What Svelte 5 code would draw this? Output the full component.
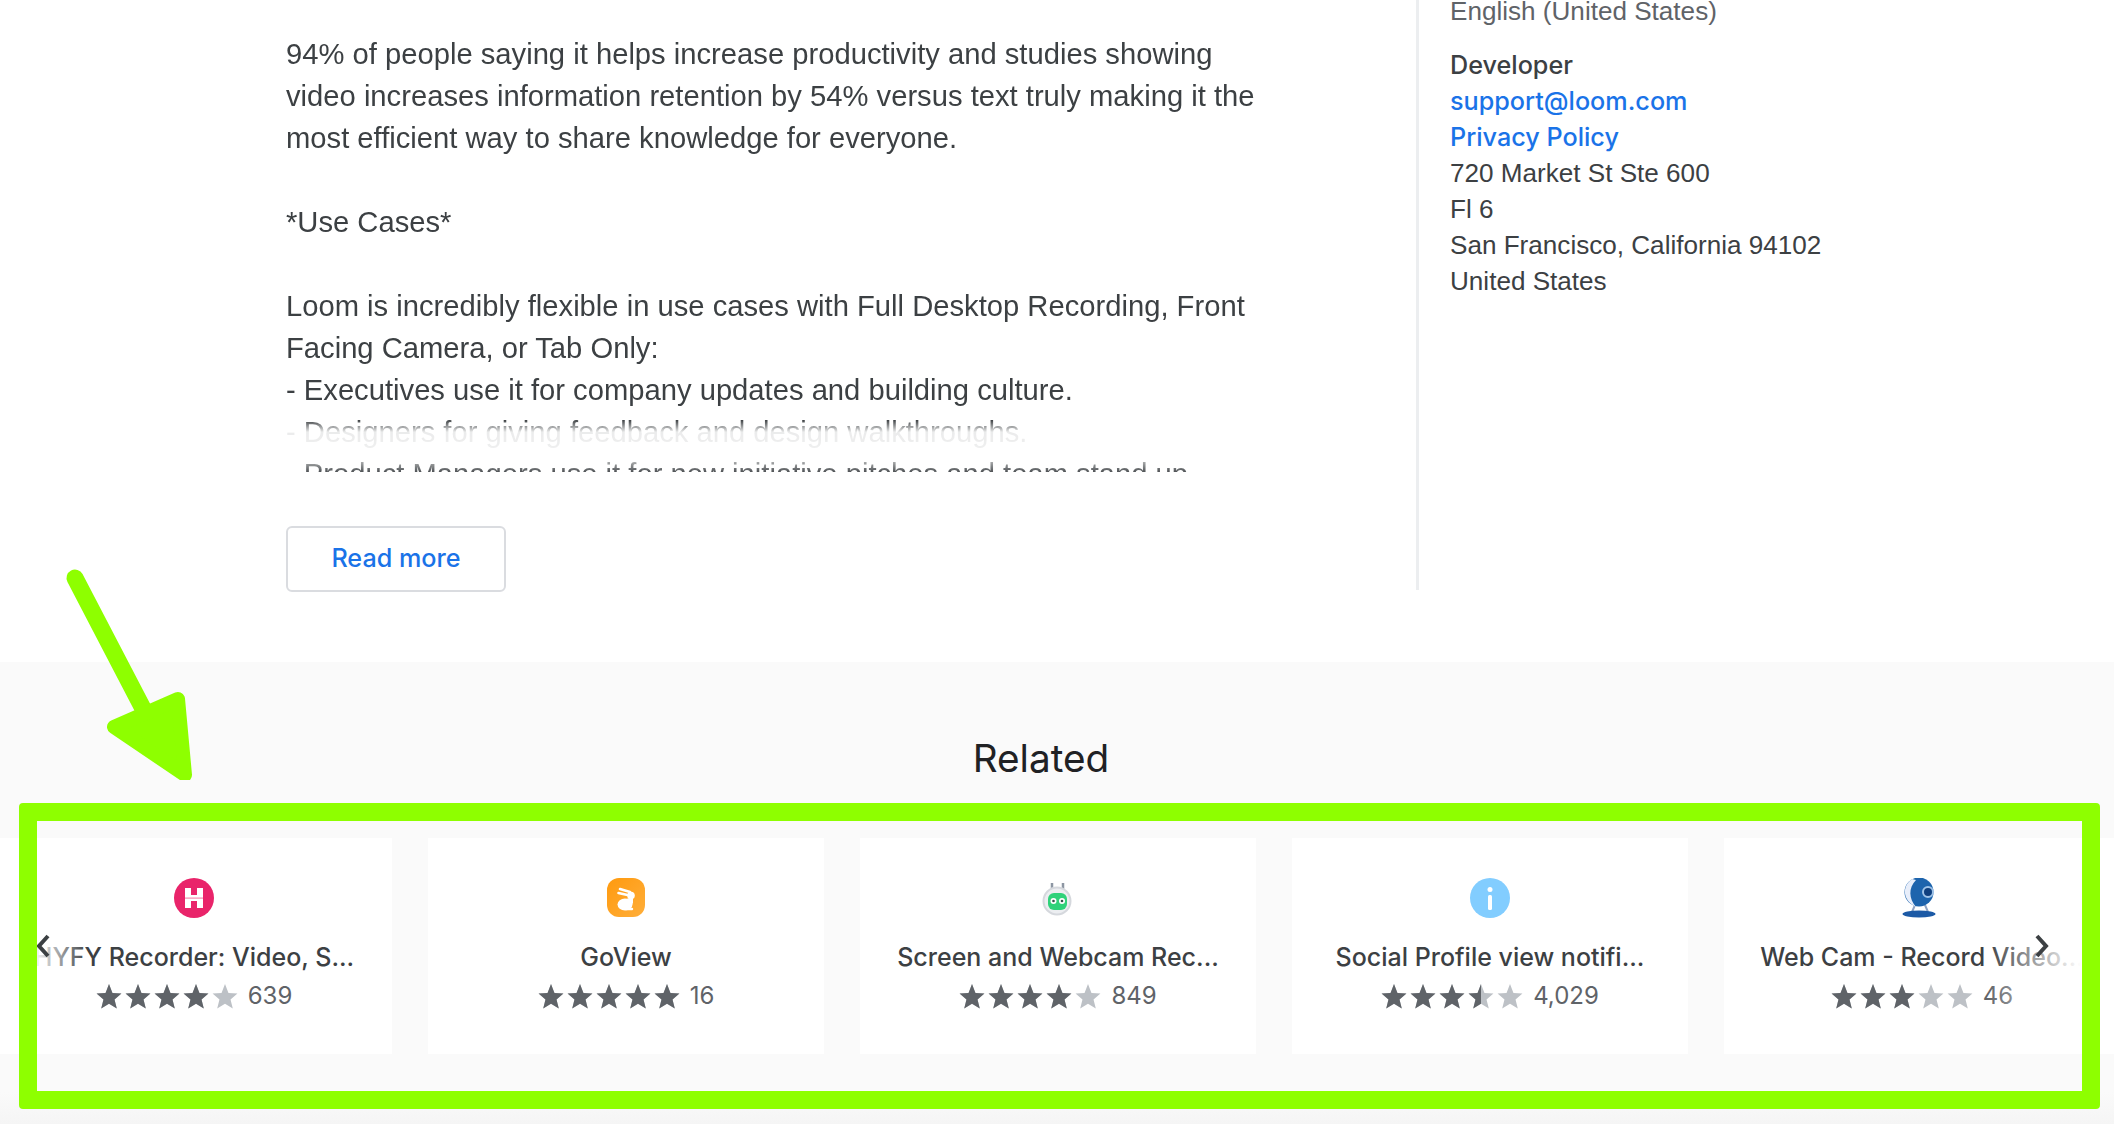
<script>
  const description = [
    "94% of people saying it helps increase productivity and studies showing",
    "video increases information retention by 54% versus text truly making it the",
    "most efficient way to share knowledge for everyone.",
    "",
    "*Use Cases*",
    "",
    "Loom is incredibly flexible in use cases with Full Desktop Recording, Front",
    "Facing Camera, or Tab Only:",
    "- Executives use it for company updates and building culture.",
    "- Designers for giving feedback and design walkthroughs.",
    "- Product Managers use it for new initiative pitches and team stand up",
  ];

  const address = ["720 Market St Ste 600", "Fl 6", "San Francisco, California 94102", "United States"];

  const cards = [
    { id: "hyfy", title: "HYFY Recorder: Video, S...", stars: [1, 1, 1, 1, 0], count: "639" },
    { id: "goview", title: "GoView", stars: [1, 1, 1, 1, 1], count: "16" },
    { id: "robot", title: "Screen and Webcam Rec...", stars: [1, 1, 1, 1, 0], count: "849" },
    { id: "info", title: "Social Profile view notifi...", stars: [1, 1, 1, 0.5, 0], count: "4,029" },
    { id: "webcam", title: "Web Cam - Record Video...", stars: [1, 1, 1, 0, 0], count: "46" },
  ];

  const starPath = "M12 1l3.2 8.2 8.3.6-6.4 5.4 2.1 8.4L12 19.1l-7.2 4.5 2.1-8.4L.5 9.8l8.3-.6z";
</script>

<main class="page">
  <section class="detail">
    <div class="overview">
      <div class="description">
        {#each description as line}
          <p class="line">{line}</p>
        {/each}
      </div>
      <button class="read-more">Read more</button>
    </div>
    <aside class="additional">
      <p class="language">English (United States)</p>
      <h3 class="label">Developer</h3>
      <a class="link" href="#support">support@loom.com</a>
      <a class="link" href="#privacy">Privacy Policy</a>
      {#each address as line}
        <p class="address">{line}</p>
      {/each}
    </aside>
  </section>

  <section class="related">
    <h2 class="related-title">Related</h2>
    <div class="carousel">
      {#each cards as card}
        <article class="card">
          <svg class="icon" viewBox="0 0 40 40" aria-hidden="true">
            {#if card.id === "hyfy"}
              <circle cx="20" cy="20" r="20" fill="#e9246a" />
              <path d="M11 10h6v7h6v-7h6v20h-6v-7h-6v7h-6z" fill="#fff" />
              <path d="M11 19.5h18v1.2H11z" fill="#f48cb0" />
            {:else if card.id === "goview"}
              <defs>
                <linearGradient id="goview-bg" x1="0" y1="0" x2="1" y2="1">
                  <stop offset="0" stop-color="#ff9a0e" />
                  <stop offset="1" stop-color="#ffae3a" />
                </linearGradient>
              </defs>
              <rect x="1" y="0" width="38" height="39" rx="12" fill="url(#goview-bg)" />
              <path d="M14 11l10 3M12.5 15l9 2" stroke="#fff" stroke-width="2.6" stroke-linecap="round" />
              <circle cx="25" cy="17.5" r="3.8" fill="#fff" />
              <ellipse cx="19" cy="26.5" rx="7.5" ry="6" fill="#fff" />
              <path d="M20 21l7-2 0 6-3 4z" fill="#fff" />
              <path d="M20 31h6" stroke="#fff" stroke-width="2.4" stroke-linecap="round" />
            {:else if card.id === "robot"}
              <path d="M14 5v9M25 5v9" stroke="#8d96a3" stroke-width="2.5" />
              <circle cx="19" cy="23" r="13.5" fill="#eceef1" stroke="#d5d8dd" stroke-width="2" />
              <rect x="10" y="15" width="19" height="17" rx="6" fill="#2fd27a" />
              <circle cx="15.5" cy="23" r="3" fill="#fff" />
              <circle cx="24" cy="23" r="3" fill="#fff" />
              <circle cx="15.5" cy="23" r="1.3" fill="#33524a" />
              <circle cx="24" cy="23" r="1.3" fill="#33524a" />
            {:else if card.id === "info"}
              <circle cx="20" cy="20" r="20" fill="#82cdff" />
              <circle cx="20" cy="11.5" r="2.5" fill="#fff" />
              <rect x="18" y="17" width="4" height="15" rx="1.5" fill="#fff" />
            {:else}
              <path d="M13 27l-3 7M23 27l3 7" stroke="#8ea3c4" stroke-width="2" />
              <ellipse cx="17" cy="36" rx="16.5" ry="3.5" fill="#1c5aa6" />
              <circle cx="17" cy="14" r="14.5" fill="#1d64ad" />
              <path d="M10 1C0 8 0 22 14 29 7 21 6 10 14 2z" fill="#e8eefa" />
              <circle cx="26" cy="14" r="5" fill="#0f3f7e" stroke="#9fc3e8" stroke-width="2" />
            {/if}
          </svg>
          <h4 class="card-title">{card.title}</h4>
          <div class="rating">
            <div class="stars">
              {#each card.stars as fill, i}
                <svg class="star" viewBox="0 0 24 24" aria-hidden="true">
                  <defs>
                    <clipPath id="half-{card.id}-{i}"><rect width={24 * fill} height="24" /></clipPath>
                  </defs>
                  <path d={starPath} fill="#bdc1c6" />
                  <path d={starPath} fill="#5f6368" clip-path="url(#half-{card.id}-{i})" />
                </svg>
              {/each}
            </div>
            <span class="count">{card.count}</span>
          </div>
        </article>
      {/each}
      <div class="fade fade-left"></div>
      <div class="fade fade-right"></div>
      <svg class="chevron chevron-left" viewBox="0 0 14 24" aria-hidden="true"><path d="M12 2L3 12l9 10" /></svg>
      <svg class="chevron chevron-right" viewBox="0 0 14 24" aria-hidden="true"><path d="M2 2l9 10-9 10" /></svg>
    </div>
  </section>

  <!-- annotation drawn on top of the screenshot -->
  <div class="frame"></div>
  <svg class="arrow" viewBox="0 0 200 240" aria-hidden="true">
    <path d="M75 38L150 182" stroke-width="17" stroke-linecap="round" fill="none" />
    <path d="M114 187L178 159 185 235z" stroke-width="14" stroke-linejoin="round" />
  </svg>
</main>

<style>
  :global(body) {
    margin: 0;
    background: #fff;
  }

  .page {
    position: relative;
    height: 1124px;
    overflow: hidden;
    font-family: "Liberation Sans", Arial, sans-serif;
    color: #3c4043;
  }

  p,
  h2,
  h3,
  h4 {
    margin: 0;
  }

  .detail {
    display: flex;
    height: 662px;
    box-sizing: border-box;
    padding-left: 286px;
  }

  .overview {
    width: 1130px;
    padding-top: 33px;
  }

  .description {
    height: 439px;
    overflow: hidden;
    width: 1000px;
    -webkit-mask-image: linear-gradient(
      to bottom,
      #000 0,
      #000 387px,
      rgba(0, 0, 0, 0.1) 399px,
      rgba(0, 0, 0, 0.08) 421px,
      rgba(0, 0, 0, 0.9) 439px
    );
    mask-image: linear-gradient(
      to bottom,
      #000 0,
      #000 387px,
      rgba(0, 0, 0, 0.1) 399px,
      rgba(0, 0, 0, 0.08) 421px,
      rgba(0, 0, 0, 0.9) 439px
    );
  }

  .line {
    height: 42px;
    font-size: 29.2px;
    line-height: 42px;
    white-space: nowrap;
  }

  .read-more {
    display: block;
    width: 220px;
    height: 66px;
    margin-top: 54px;
    padding: 0 0 2px;
    border: 2px solid #dadce0;
    border-radius: 6px;
    background: #fff;
    color: #1a73e8;
    font-family: Inter, sans-serif;
    font-size: 25.2px;
    font-weight: 500;
  }

  .additional {
    display: flex;
    flex-direction: column;
    align-items: flex-start;
    height: 590px;
    padding-left: 31px;
    border-left: 3px solid #eceef0;
    font-size: 26.1px;
    line-height: 36px;
  }

  .language {
    margin-top: -7px;
    margin-bottom: 18px;
    color: #5f6368;
  }

  .label {
    color: #3c4043;
    font-family: Inter, sans-serif;
    font-size: 25.2px;
    font-weight: 500;
  }

  .link {
    color: #1a73e8;
    font-family: Inter, sans-serif;
    font-size: 25.2px;
    font-weight: 500;
    text-decoration: none;
  }

  .related {
    height: 462px;
    background: linear-gradient(to bottom, #fafafa 0, #fafafa 430px, #f5f5f5 462px);
  }

  .related-title {
    padding-top: 72px;
    padding-right: 32px;
    color: #202124;
    font-family: Inter, sans-serif;
    font-size: 38.7px;
    font-weight: 400;
    line-height: 48px;
    text-align: center;
  }

  .carousel {
    position: relative;
    display: flex;
    gap: 36px;
    margin-top: 56px;
    margin-left: -4px;
  }

  .card {
    display: flex;
    flex: none;
    flex-direction: column;
    align-items: center;
    width: 396px;
    height: 216px;
    box-sizing: border-box;
    padding-top: 40px;
    background: #fff;
  }

  .icon {
    display: block;
    width: 40px;
    height: 40px;
    filter: blur(0.6px);
  }

  .card-title {
    margin-top: 23px;
    color: #3c4043;
    font-family: Inter, sans-serif;
    font-size: 25px;
    font-weight: 500;
    line-height: 32px;
    white-space: nowrap;
  }

  .rating {
    display: flex;
    align-items: center;
    gap: 10px;
    margin-top: 7px;
  }

  .stars {
    display: flex;
    gap: 3px;
  }

  .star {
    display: block;
    width: 26px;
    height: 26px;
  }

  .count {
    color: #5f6368;
    font-family: Inter, sans-serif;
    font-size: 24px;
    line-height: 32px;
  }

  .fade {
    position: absolute;
    top: 0;
    bottom: 0;
  }

  .fade-left {
    left: 0;
    width: 92px;
    background: linear-gradient(to right, #fff 40%, rgba(255, 255, 255, 0));
  }

  .fade-right {
    left: 1990px;
    width: 100px;
    background: linear-gradient(to left, #fff 5%, rgba(255, 255, 255, 0));
  }

  .chevron {
    position: absolute;
    top: 96px;
    width: 14px;
    height: 24px;
    fill: none;
    stroke: #3c4043;
    stroke-width: 4;
  }

  .chevron-left {
    left: 40px;
  }

  .chevron-right {
    left: 2039px;
  }

  .frame {
    position: absolute;
    left: 19px;
    top: 803px;
    width: 2081px;
    height: 306px;
    box-sizing: border-box;
    border: 18px solid #8eff00;
    border-radius: 4px;
    pointer-events: none;
  }

  .arrow {
    position: absolute;
    left: 0;
    top: 540px;
    width: 200px;
    height: 240px;
    fill: #8eff00;
    stroke: #8eff00;
  }
</style>
